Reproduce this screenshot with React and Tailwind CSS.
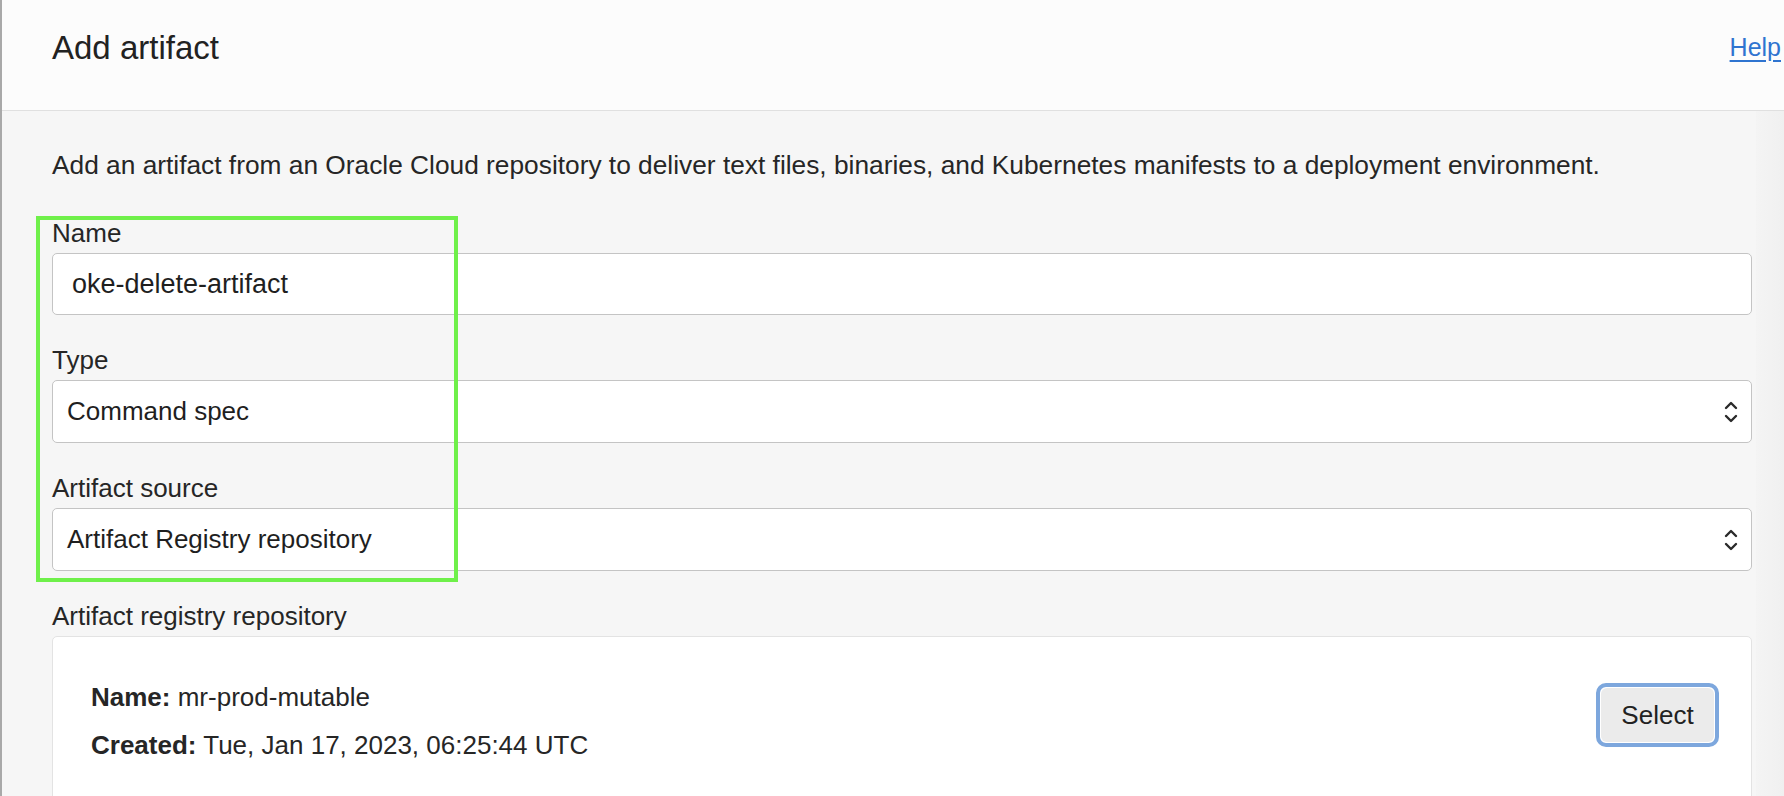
import React from 'react';

const font = { fontFamily: '"Liberation Sans", Arial, sans-serif' };

const Chevrons = () => (
  <svg width="16" height="26" viewBox="0 0 16 26" fill="none" stroke="#2a2a2a" strokeWidth="2.4" strokeLinecap="round" strokeLinejoin="round">
    <path d="M3 9 L8 4 L13 9" />
    <path d="M3 17 L8 22 L13 17" />
  </svg>
);

const Field = ({ label, children }) => (
  <div className="flex flex-col">
    <label className="text-[26px] leading-[28px] text-[#262626] mb-[6px]">{label}</label>
    {children}
  </div>
);

const SelectBox = ({ value }) => (
  <div className="h-[63px] bg-white border border-[#c4c4c4] rounded-[5px] flex items-center justify-between pl-[14px] pr-[12px]">
    <span className="text-[26px] text-[#1f1f1f]">{value}</span>
    <Chevrons />
  </div>
);

export default function App() {
  return (
    <div className="relative w-full h-[796px] overflow-hidden bg-[#f6f6f6] border-l-2 border-[#a9a9a9] flex flex-col" style={font}>
      {/* header */}
      <div className="h-[111px] shrink-0 bg-[#fcfcfc] border-b border-[#e0e0e0] flex items-center justify-between pl-[50px] pr-[3px] pb-[14px]">
        <h1 className="text-[33px] text-[#222] font-normal">Add artifact</h1>
        <a href="#" className="text-[25px] text-[#2f74d0] underline underline-offset-4">Help</a>
      </div>

      <div className="flex flex-1">
        <div className="flex-1 pl-[50px] pr-[4px] pt-[40px]">
          <p className="text-[26.3px] leading-[28px] text-[#262626]">
            Add an artifact from an Oracle Cloud repository to deliver text files, binaries, and Kubernetes manifests to a deployment environment.
          </p>

          <div className="mt-[40px] flex flex-col gap-[31px]">
            <Field label="Name">
              <div className="h-[62px] bg-white border border-[#c4c4c4] rounded-[5px] flex items-center pl-[19px]">
                <span className="text-[27px] text-[#1f1f1f]">oke-delete-artifact</span>
              </div>
            </Field>
            <Field label="Type">
              <SelectBox value="Command spec" />
            </Field>
            <Field label="Artifact source">
              <SelectBox value="Artifact Registry repository" />
            </Field>
            <Field label="Artifact registry repository">
              <div className="h-[200px] bg-white border border-[#e3e3e3] rounded-[5px] flex items-start justify-between pl-[38px] pr-[32px] pt-[46px]">
                <div className="flex flex-col gap-[20px] text-[26px] leading-[28px] text-[#262626]">
                  <div><span className="font-bold">Name:</span> mr-prod-mutable</div>
                  <div><span className="font-bold">Created:</span> Tue, Jan 17, 2023, 06:25:44 UTC</div>
                </div>
                <button className="w-[123px] h-[64px] rounded-[10px] border-[4px] border-[#7da7dd] bg-white p-[1px]">
                  <span className="flex h-full w-full items-center justify-center rounded-[6px] bg-[#ebebeb] text-[26px] text-[#222]">Select</span>
                </button>
              </div>
            </Field>
          </div>
        </div>
        <div className="w-[28px] shrink-0 bg-gradient-to-r from-[#f4f4f4] to-[#f0f0f0]" />
      </div>

      {/* annotation box */}
      <div className="absolute left-[34px] top-[216px] w-[422px] h-[366px] border-[4px] border-[#6ff04a] pointer-events-none" />
    </div>
  );
}
